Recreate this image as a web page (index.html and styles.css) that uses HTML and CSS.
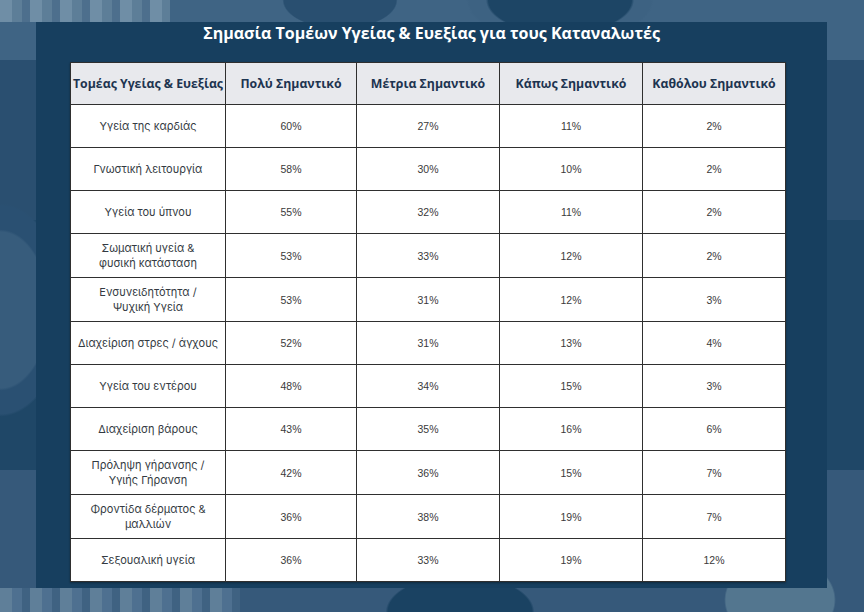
FILE: index.html
```html
<!DOCTYPE html>
<html lang="el">
<head>
<meta charset="utf-8">
<title>Σημασία Τομέων Υγείας &amp; Ευεξίας</title>
<link rel="stylesheet" href="styles.css">
</head>
<body>
<div class="backdrop">
  <div class="panel">
    <h1 class="title">Σημασία Τομέων Υγείας &amp; Ευεξίας για τους Καταναλωτές</h1>
    <table class="grid">
      <colgroup>
        <col class="c1"><col class="c2"><col class="c3"><col class="c4"><col class="c5">
      </colgroup>
      <thead>
        <tr class="head">
          <th>Τομέας Υγείας &amp; Ευεξίας</th>
          <th>Πολύ Σημαντικό</th>
          <th>Μέτρια Σημαντικό</th>
          <th>Κάπως Σημαντικό</th>
          <th>Καθόλου Σημαντικό</th>
        </tr>
      </thead>
      <tbody>
        <tr class="r"><td class="lab">Υγεία της καρδιάς</td><td>60%</td><td>27%</td><td>11%</td><td>2%</td></tr>
        <tr class="r"><td class="lab">Γνωστική λειτουργία</td><td>58%</td><td>30%</td><td>10%</td><td>2%</td></tr>
        <tr class="r"><td class="lab">Υγεία του ύπνου</td><td>55%</td><td>32%</td><td>11%</td><td>2%</td></tr>
        <tr class="r2"><td class="lab">Σωματική υγεία &amp;<br>φυσική κατάσταση</td><td>53%</td><td>33%</td><td>12%</td><td>2%</td></tr>
        <tr class="r2"><td class="lab">Ενσυνειδητότητα /<br>Ψυχική Υγεία</td><td>53%</td><td>31%</td><td>12%</td><td>3%</td></tr>
        <tr class="r"><td class="lab">Διαχείριση στρες / άγχους</td><td>52%</td><td>31%</td><td>13%</td><td>4%</td></tr>
        <tr class="r"><td class="lab">Υγεία του εντέρου</td><td>48%</td><td>34%</td><td>15%</td><td>3%</td></tr>
        <tr class="r"><td class="lab">Διαχείριση βάρους</td><td>43%</td><td>35%</td><td>16%</td><td>6%</td></tr>
        <tr class="r2"><td class="lab">Πρόληψη γήρανσης /<br>Υγιής Γήρανση</td><td>42%</td><td>36%</td><td>15%</td><td>7%</td></tr>
        <tr class="r2"><td class="lab">Φροντίδα δέρματος &amp;<br>μαλλιών</td><td>36%</td><td>38%</td><td>19%</td><td>7%</td></tr>
        <tr class="r"><td class="lab">Σεξουαλική υγεία</td><td>36%</td><td>33%</td><td>19%</td><td>12%</td></tr>
      </tbody>
    </table>
  </div>
</div>
</body>
</html>
```
FILE: styles.css
```css
* { box-sizing: border-box; }
html, body { margin: 0; padding: 0; }
body {
  width: 864px;
  height: 612px;
  overflow: hidden;
  background-color: #1f4767;
}
.backdrop {
  width: 864px;
  height: 612px;
  padding: 22px 37px 24px 36px;
  background:
    repeating-linear-gradient(90deg, #6f8ea6 0 12px, #5d7e98 12px 22px, #4d6f8d 22px 30px),
    repeating-linear-gradient(90deg, #5f7f99 0 12px, #4e7090 12px 22px, #3f6282 22px 30px),
    radial-gradient(ellipse 130px 60px at 560px 0px, #1d4565 0 55%, #3d6282 57% 70%, transparent 72%),
    radial-gradient(ellipse 80px 40px at 340px 0px, #294f70 0 70%, transparent 72%),
    radial-gradient(ellipse 120px 60px at 460px 612px, #1a4262 0 60%, transparent 62%),
    radial-gradient(ellipse 90px 70px at 780px 600px, #53768f 0 60%, transparent 62%),
    radial-gradient(ellipse 80px 130px at 0px 310px, #375c7c 0 60%, #2a5072 62% 80%, transparent 82%),
    linear-gradient(180deg, #3f6484 0 60px, #2a4f70 60px 220px, #1f4767 220px 470px, #36597a 470px 612px);
  background-size: 170px 22px, 240px 24px, 100% 100%, 100% 100%, 100% 100%, 100% 100%, 100% 100%, 100% 100%;
  background-position: 0 0, 0 100%, 0 0, 0 0, 0 0, 0 0, 0 0, 0 0;
  background-repeat: no-repeat;
}
.panel {
  height: 100%;
  background: #173f5f;
  padding-left: 34px;
}
.title {
  margin: 0 0 18px 0;
  padding-right: 34px;
  height: 22px;
  line-height: 22px;
  text-align: center;
  color: #ffffff;
  font-family: "Open Sans", "Noto Sans", sans-serif;
  font-weight: 700;
  font-size: 16px;
}
.grid {
  width: 715px;
  border-collapse: collapse;
  table-layout: fixed;
  background: #ffffff;
  border: 1px solid #2b2b2b;
  box-shadow: 0 1px 2px rgba(0,0,0,0.35);
}
.c1 { width: 155px; }
.c2 { width: 131px; }
.c3 { width: 143px; }
.c4 { width: 143px; }
.c5 { width: 143px; }
.grid th, .grid td {
  border: 1px solid #2f2f2f;
  text-align: center;
  vertical-align: middle;
  padding: 0 4px;
}
.head { height: 42px; background: #e8e9ed; }
.grid th {
  font-family: "Open Sans", "Noto Sans", sans-serif;
  font-weight: 700;
  font-size: 12.3px;
  color: #1d3450;
  white-space: nowrap;
  padding: 0 2px;
}
.r { height: 43px; }
.r2 { height: 44px; }
.grid td {
  font-family: "Liberation Sans", Arial, sans-serif;
  font-size: 10.5px;
  color: #3a3a3a;
}
.grid td.lab {
  font-family: "Inter", "Noto Sans", sans-serif;
  font-size: 11px;
  line-height: 15px;
  color: #333a42;
  white-space: nowrap;
}
```
